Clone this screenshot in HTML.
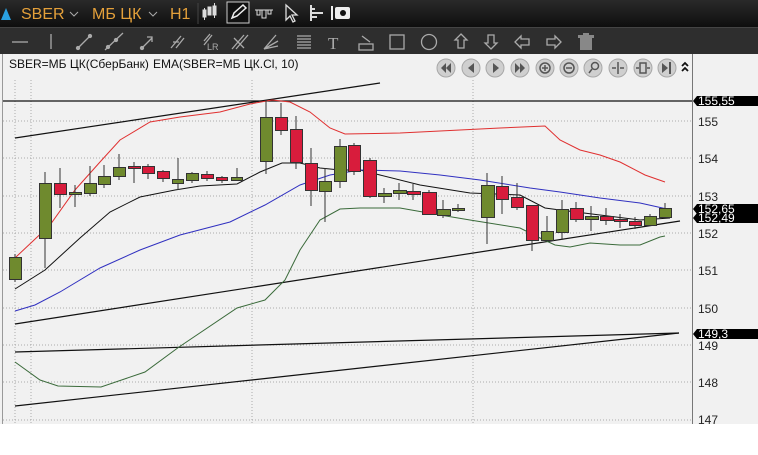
<!DOCTYPE html>
<html><head><meta charset="utf-8"><style>
body{margin:0;width:758px;height:455px;overflow:hidden;background:#fff;font-family:"Liberation Sans",sans-serif}
#top{position:absolute;left:0;top:0;width:758px;height:27px;background:linear-gradient(#2a2a2a,#0e0e0e);}
#tb2{position:absolute;left:0;top:27px;width:758px;height:27px;background:#2e2e2e;border-top:1px solid #444}
.ax{font-family:"Liberation Sans",sans-serif;font-size:12px;fill:#222}
</style></head><body>
<div id="top">
<svg width="758" height="27" style="position:absolute;left:0;top:0">
<polygon points="1,20 6,8 11,20" fill="#2aa0e0"/>
<text x="21" y="19" fill="#e4a03a" font-size="16" font-family="Liberation Sans">SBER</text>
<path d="M70 12 l4 4 l4 -4" stroke="#aaa" fill="none"/>
<text x="92" y="19" fill="#e4a03a" font-size="16" font-family="Liberation Sans">МБ ЦК</text>
<path d="M149 12 l4 4 l4 -4" stroke="#aaa" fill="none"/>
<text x="170" y="19" fill="#e4a03a" font-size="16" font-family="Liberation Sans">H1</text>
<line x1="198" y1="3" x2="198" y2="24" stroke="#444"/>
<g stroke="#ddd" fill="#ddd"><rect x="203" y="10" width="3" height="7"/><rect x="208" y="7" width="3" height="8"/><rect x="213" y="6" width="3" height="9"/><line x1="204.5" y1="8" x2="204.5" y2="20"/><line x1="214.5" y1="3" x2="214.5" y2="18"/></g>
<rect x="227" y="2" width="22" height="21" fill="#111" stroke="#ccc"/>
<path d="M232 18 l2 -5 l9 -8 l3 3 l-9 8 z" fill="none" stroke="#eee" stroke-width="1.5"/>
<g stroke="#ddd" fill="none"><path d="M255 10 h18 M257 10 v5 h3 v-5 M262 10 v8 h4 v-8 M268 10 v4 h3 v-4"/></g>
<path d="M286 5 v15 l4 -4 l3 6 l2 -1 l-3 -6 h5 z" fill="none" stroke="#ddd" stroke-width="1.3"/>
<g stroke="#ddd" stroke-width="2"><path d="M311 5 v16 M311 9 h4 M311 13 h12 M311 17 h6"/></g>
<rect x="331" y="6" width="2" height="14" fill="#eee"/><rect x="335" y="7" width="15" height="12" rx="2" fill="#eee"/><circle cx="343" cy="13" r="3" fill="#111"/>
</svg>
</div>
<div id="tb2">
<svg width="758" height="27" style="position:absolute;left:0;top:0">
<g stroke="#aaa" fill="none" stroke-width="1.3">
<line x1="12" y1="14" x2="28" y2="14"/>
<line x1="51" y1="6" x2="51" y2="21"/>
<path d="M78 20 l12 -12"/><circle cx="78" cy="20" r="1.5" fill="#aaa"/><circle cx="90" cy="8" r="1.5" fill="#aaa"/>
<path d="M105 22 l18 -17"/><circle cx="108" cy="19" r="1.5" fill="#aaa"/><circle cx="116" cy="12" r="1.5" fill="#aaa"/>
<path d="M142 20 l10 -10 M147 9 h5 v5"/><circle cx="142" cy="20" r="1.5" fill="#aaa"/>
<path d="M171 20 l10 -12 M176 20 l8 -10 M173 14 h6"/>
<path d="M204 17 l8 -10 M204 13 l6 -7"/>
<text x="207" y="22" font-size="9" fill="#aaa" stroke="none">LR</text>
<path d="M232 21 l12 -14 M236 21 l12 -14 M234 10 l10 10"/>
<path d="M264 21 l12 -14 M264 21 l14 -8 M264 21 l14 -3"/>
<path d="M297 8 h14 M297 11 h14 M297 14 h14 M297 17 h14 M297 20 h14"/>
<text x="328" y="21" font-size="17" fill="#aaa" stroke="none" font-family="Liberation Serif">T</text>
<rect x="359" y="16" width="14" height="6"/><path d="M362 8 l8 6"/>
<rect x="390" y="7" width="14" height="14"/>
<circle cx="429" cy="14" r="7.5"/>
<path d="M461 6 l6 6 h-3 v8 h-6 v-8 h-3 z"/>
<path d="M491 21 l6 -6 h-3 v-8 h-6 v8 h-3 z"/>
<path d="M515 14 l6 -6 v3 h8 v6 h-8 v3 z"/>
<path d="M561 14 l-6 -6 v3 h-8 v6 h8 v3 z"/>
</g>
<rect x="580" y="10" width="12" height="12" fill="#888"/><rect x="578" y="7" width="16" height="3" fill="#888"/><rect x="583" y="5" width="6" height="2" fill="#888"/>
</svg>
</div>
<svg width="758" height="401" style="position:absolute;left:0;top:54px" viewBox="0 54 758 401">
<rect x="0" y="54" width="758" height="372" fill="#f1f1f1"/>
<rect x="0" y="424" width="758" height="31" fill="#fff"/>
<line x1="2.5" y1="54" x2="2.5" y2="424" stroke="#999"/>
<line x1="692.5" y1="54" x2="692.5" y2="424" stroke="#777"/>
<text x="9" y="68" font-size="12" fill="#111" font-family="Liberation Sans">SBER=МБ ЦК(СберБанк)</text>
<text x="153" y="68" font-size="12" fill="#111" font-family="Liberation Sans">EMA(SBER=МБ ЦК.Cl, 10)</text>
<g stroke="#aaa" stroke-dasharray="1,2" stroke-width="1">
<line x1="3" y1="121" x2="692" y2="121"/><line x1="3" y1="158" x2="692" y2="158"/><line x1="3" y1="196" x2="692" y2="196"/><line x1="3" y1="233" x2="692" y2="233"/><line x1="3" y1="270" x2="692" y2="270"/><line x1="3" y1="308" x2="692" y2="308"/><line x1="3" y1="345" x2="692" y2="345"/><line x1="3" y1="382" x2="692" y2="382"/><line x1="3" y1="420" x2="692" y2="420"/>
<line x1="15" y1="80" x2="15" y2="424"/><line x1="31" y1="80" x2="31" y2="424"/><line x1="252" y1="80" x2="252" y2="424"/><line x1="473" y1="80" x2="473" y2="424"/>
</g>
<g fill="#cfcfcf" stroke="#a8a8a8">
<circle cx="446" cy="68" r="9"/><circle cx="471" cy="68" r="9"/><circle cx="495" cy="68" r="9"/><circle cx="520" cy="68" r="9"/><circle cx="545" cy="68" r="9"/><circle cx="569" cy="68" r="9"/><circle cx="593" cy="68" r="9"/><circle cx="618" cy="68" r="9"/><circle cx="643" cy="68" r="9"/><circle cx="667" cy="68" r="9"/>
</g>
<g fill="#555">
<path d="M441 68 l5 -5 v10z M446 68 l5 -5 v10z"/><path d="M468 68 l6 -5 v10z"/><path d="M493 63 l6 5 l-6 5z"/><path d="M515 63 l5 5 l-5 5z M520 63 l5 5 l-5 5z"/>
<path d="M662 63 l6 5 l-6 5z"/><rect x="669" y="62" width="2" height="12"/>
</g>
<g stroke="#555" fill="none" stroke-width="1.5">
<circle cx="545" cy="68" r="5"/><path d="M542 68 h6 M545 65 v6"/><circle cx="569" cy="68" r="5"/><path d="M566 68 h6"/>
<circle cx="595" cy="66" r="3.5"/><path d="M592 69 l-3 4"/>
<path d="M618 62 v12 M612 68 h4 M620 68 h4"/><rect x="640" y="63" width="6" height="10"/><path d="M636 68 h3 M647 68 h3"/>
<path d="M682 66 l3 -3 l3 3 M682 71 l3 -3 l3 3" stroke="#111" stroke-width="1.8"/>
</g>
<line x1="3" y1="101" x2="692" y2="101" stroke="#111" stroke-width="1.2"/>
<g stroke="#111" stroke-width="1.2">
<line x1="15" y1="138" x2="380" y2="83"/>
<line x1="15" y1="324" x2="680" y2="221"/>
<line x1="15" y1="352" x2="679" y2="333"/>
<line x1="15" y1="406" x2="679" y2="333"/>
</g>
<g fill="none" stroke-width="1">
<polyline stroke="#e03030" points="16,257 50,225 75,190 100,162 120,140 150,122 180,117 220,112 250,104 272,100 290,102 310,112 330,128 345,134 400,133 500,128 545,126 560,140 580,150 600,155 620,162 645,175 665,182"/>
<polyline stroke="#111" points="15,289 45,270 80,238 110,212 140,197 175,190 200,186 237,184 260,172 282,163 300,163 320,168 340,170 360,170 380,175 420,185 470,193 520,195 545,208 560,210 600,215 640,220 670,218"/>
<polyline stroke="#3030c0" points="15,311 35,305 60,292 100,268 140,250 180,235 230,222 265,205 300,185 330,175 360,170 400,171 440,175 480,180 530,188 560,192 600,198 640,203 667,209"/>
<polyline stroke="#3a6a3a" points="15,362 40,380 58,386 101,387 145,372 179,347 237,308 265,300 285,280 300,250 320,220 340,209 360,208 400,208 440,215 470,220 520,228 540,238 555,245 570,247 590,243 620,245 640,245 660,237 665,236"/>
</g>
<g stroke="#333" stroke-width="1">
<line x1="15" y1="254" x2="15" y2="282"/><line x1="45" y1="172" x2="45" y2="268"/><line x1="60" y1="168" x2="60" y2="208"/><line x1="75" y1="185" x2="75" y2="207"/><line x1="90" y1="166" x2="90" y2="196"/><line x1="104" y1="165" x2="104" y2="188"/><line x1="119" y1="154" x2="119" y2="180"/><line x1="134" y1="162" x2="134" y2="183"/><line x1="148" y1="164" x2="148" y2="179"/><line x1="163" y1="170" x2="163" y2="182"/><line x1="178" y1="158" x2="178" y2="190"/><line x1="192" y1="172" x2="192" y2="183"/><line x1="207" y1="171" x2="207" y2="181"/><line x1="222" y1="176" x2="222" y2="183"/><line x1="237" y1="168" x2="237" y2="181"/>
<line x1="266" y1="100" x2="266" y2="174"/><line x1="281" y1="103" x2="281" y2="135"/><line x1="296" y1="116" x2="296" y2="169"/><line x1="311" y1="148" x2="311" y2="206"/><line x1="325" y1="168" x2="325" y2="222"/><line x1="340" y1="139" x2="340" y2="188"/><line x1="354" y1="143" x2="354" y2="175"/><line x1="370" y1="158" x2="370" y2="198"/><line x1="384" y1="188" x2="384" y2="203"/><line x1="399" y1="183" x2="399" y2="200"/><line x1="413" y1="184" x2="413" y2="200"/><line x1="429" y1="190" x2="429" y2="215"/><line x1="443" y1="200" x2="443" y2="218"/><line x1="458" y1="204" x2="458" y2="212"/>
<line x1="487" y1="173" x2="487" y2="244"/><line x1="502" y1="176" x2="502" y2="214"/><line x1="517" y1="183" x2="517" y2="210"/><line x1="532" y1="205" x2="532" y2="251"/><line x1="547" y1="216" x2="547" y2="241"/><line x1="562" y1="200" x2="562" y2="240"/><line x1="576" y1="202" x2="576" y2="222"/><line x1="591" y1="206" x2="591" y2="231"/><line x1="606" y1="208" x2="606" y2="225"/><line x1="620" y1="214" x2="620" y2="228"/><line x1="635" y1="217" x2="635" y2="229"/><line x1="650" y1="214" x2="650" y2="226"/><line x1="665" y1="203" x2="665" y2="218"/>
</g>
<g stroke="#333" stroke-width="1">
<g fill="#6f8a2e">
<rect x="9.5" y="257.5" width="12" height="22"/><rect x="39.5" y="183.5" width="12" height="55"/><rect x="69.5" y="192.5" width="12" height="2"/><rect x="84.5" y="183.5" width="12" height="10"/><rect x="98.5" y="176.5" width="12" height="8"/><rect x="113.5" y="167.5" width="12" height="9"/><rect x="172.5" y="179.5" width="11" height="4"/><rect x="186.5" y="173.5" width="12" height="7"/><rect x="231.5" y="177.5" width="11" height="3"/>
<rect x="260.5" y="117.5" width="12" height="44"/><rect x="319.5" y="181.5" width="12" height="10"/><rect x="334.5" y="146.5" width="12" height="35"/><rect x="378.5" y="193.5" width="13" height="3"/><rect x="393.5" y="190.5" width="13" height="3"/><rect x="437.5" y="209.5" width="13" height="6"/><rect x="452.5" y="208.5" width="12" height="2"/>
<rect x="481.5" y="185.5" width="13" height="32"/><rect x="541.5" y="231.5" width="12" height="9"/><rect x="556.5" y="209.5" width="12" height="23"/><rect x="585.5" y="216.5" width="13" height="3"/><rect x="644.5" y="216.5" width="12" height="9"/><rect x="659.5" y="208.5" width="12" height="9"/>
</g>
<g fill="#d81c3c">
<rect x="54.5" y="183.5" width="12" height="11"/><rect x="128.5" y="166.5" width="12" height="2"/><rect x="142.5" y="166.5" width="12" height="7"/><rect x="157.5" y="171.5" width="12" height="7"/><rect x="201.5" y="174.5" width="12" height="4"/><rect x="216.5" y="177.5" width="11" height="3"/>
<rect x="275.5" y="117.5" width="12" height="13"/><rect x="290.5" y="129.5" width="12" height="33"/><rect x="305.5" y="163.5" width="12" height="27"/><rect x="348.5" y="145.5" width="12" height="26"/><rect x="363.5" y="160.5" width="13" height="36"/><rect x="407.5" y="191.5" width="13" height="3"/><rect x="422.5" y="192.5" width="14" height="22"/>
<rect x="496.5" y="186.5" width="12" height="13"/><rect x="511.5" y="197.5" width="12" height="10"/><rect x="526.5" y="205.5" width="12" height="35"/><rect x="570.5" y="208.5" width="13" height="11"/><rect x="600.5" y="216.5" width="13" height="4"/><rect x="614.5" y="219.5" width="13" height="2"/><rect x="629.5" y="221.5" width="12" height="4"/>
</g></g>
<g class="ax"><text x="698" y="126">155</text><text x="698" y="163">154</text><text x="698" y="201">153</text><text x="698" y="238">152</text><text x="698" y="275">151</text><text x="698" y="313">150</text><text x="698" y="350">149</text><text x="698" y="387">148</text><text x="698" y="424">147</text></g>
<g fill="#000"><path d="M693 101 l4 -5 h61 v10 h-61z"/><path d="M693 218 l4 -5 h61 v10 h-61z"/><path d="M693 209 l4 -5 h61 v10 h-61z"/><path d="M693 334 l4 -5 h61 v10 h-61z"/></g>
<g font-size="12" fill="#fff" font-family="Liberation Sans"><text x="698" y="105">155,55</text><text x="698" y="222">152,49</text><text x="698" y="213">152,65</text><text x="698" y="338">149,3</text></g>
</svg>
</body></html>
